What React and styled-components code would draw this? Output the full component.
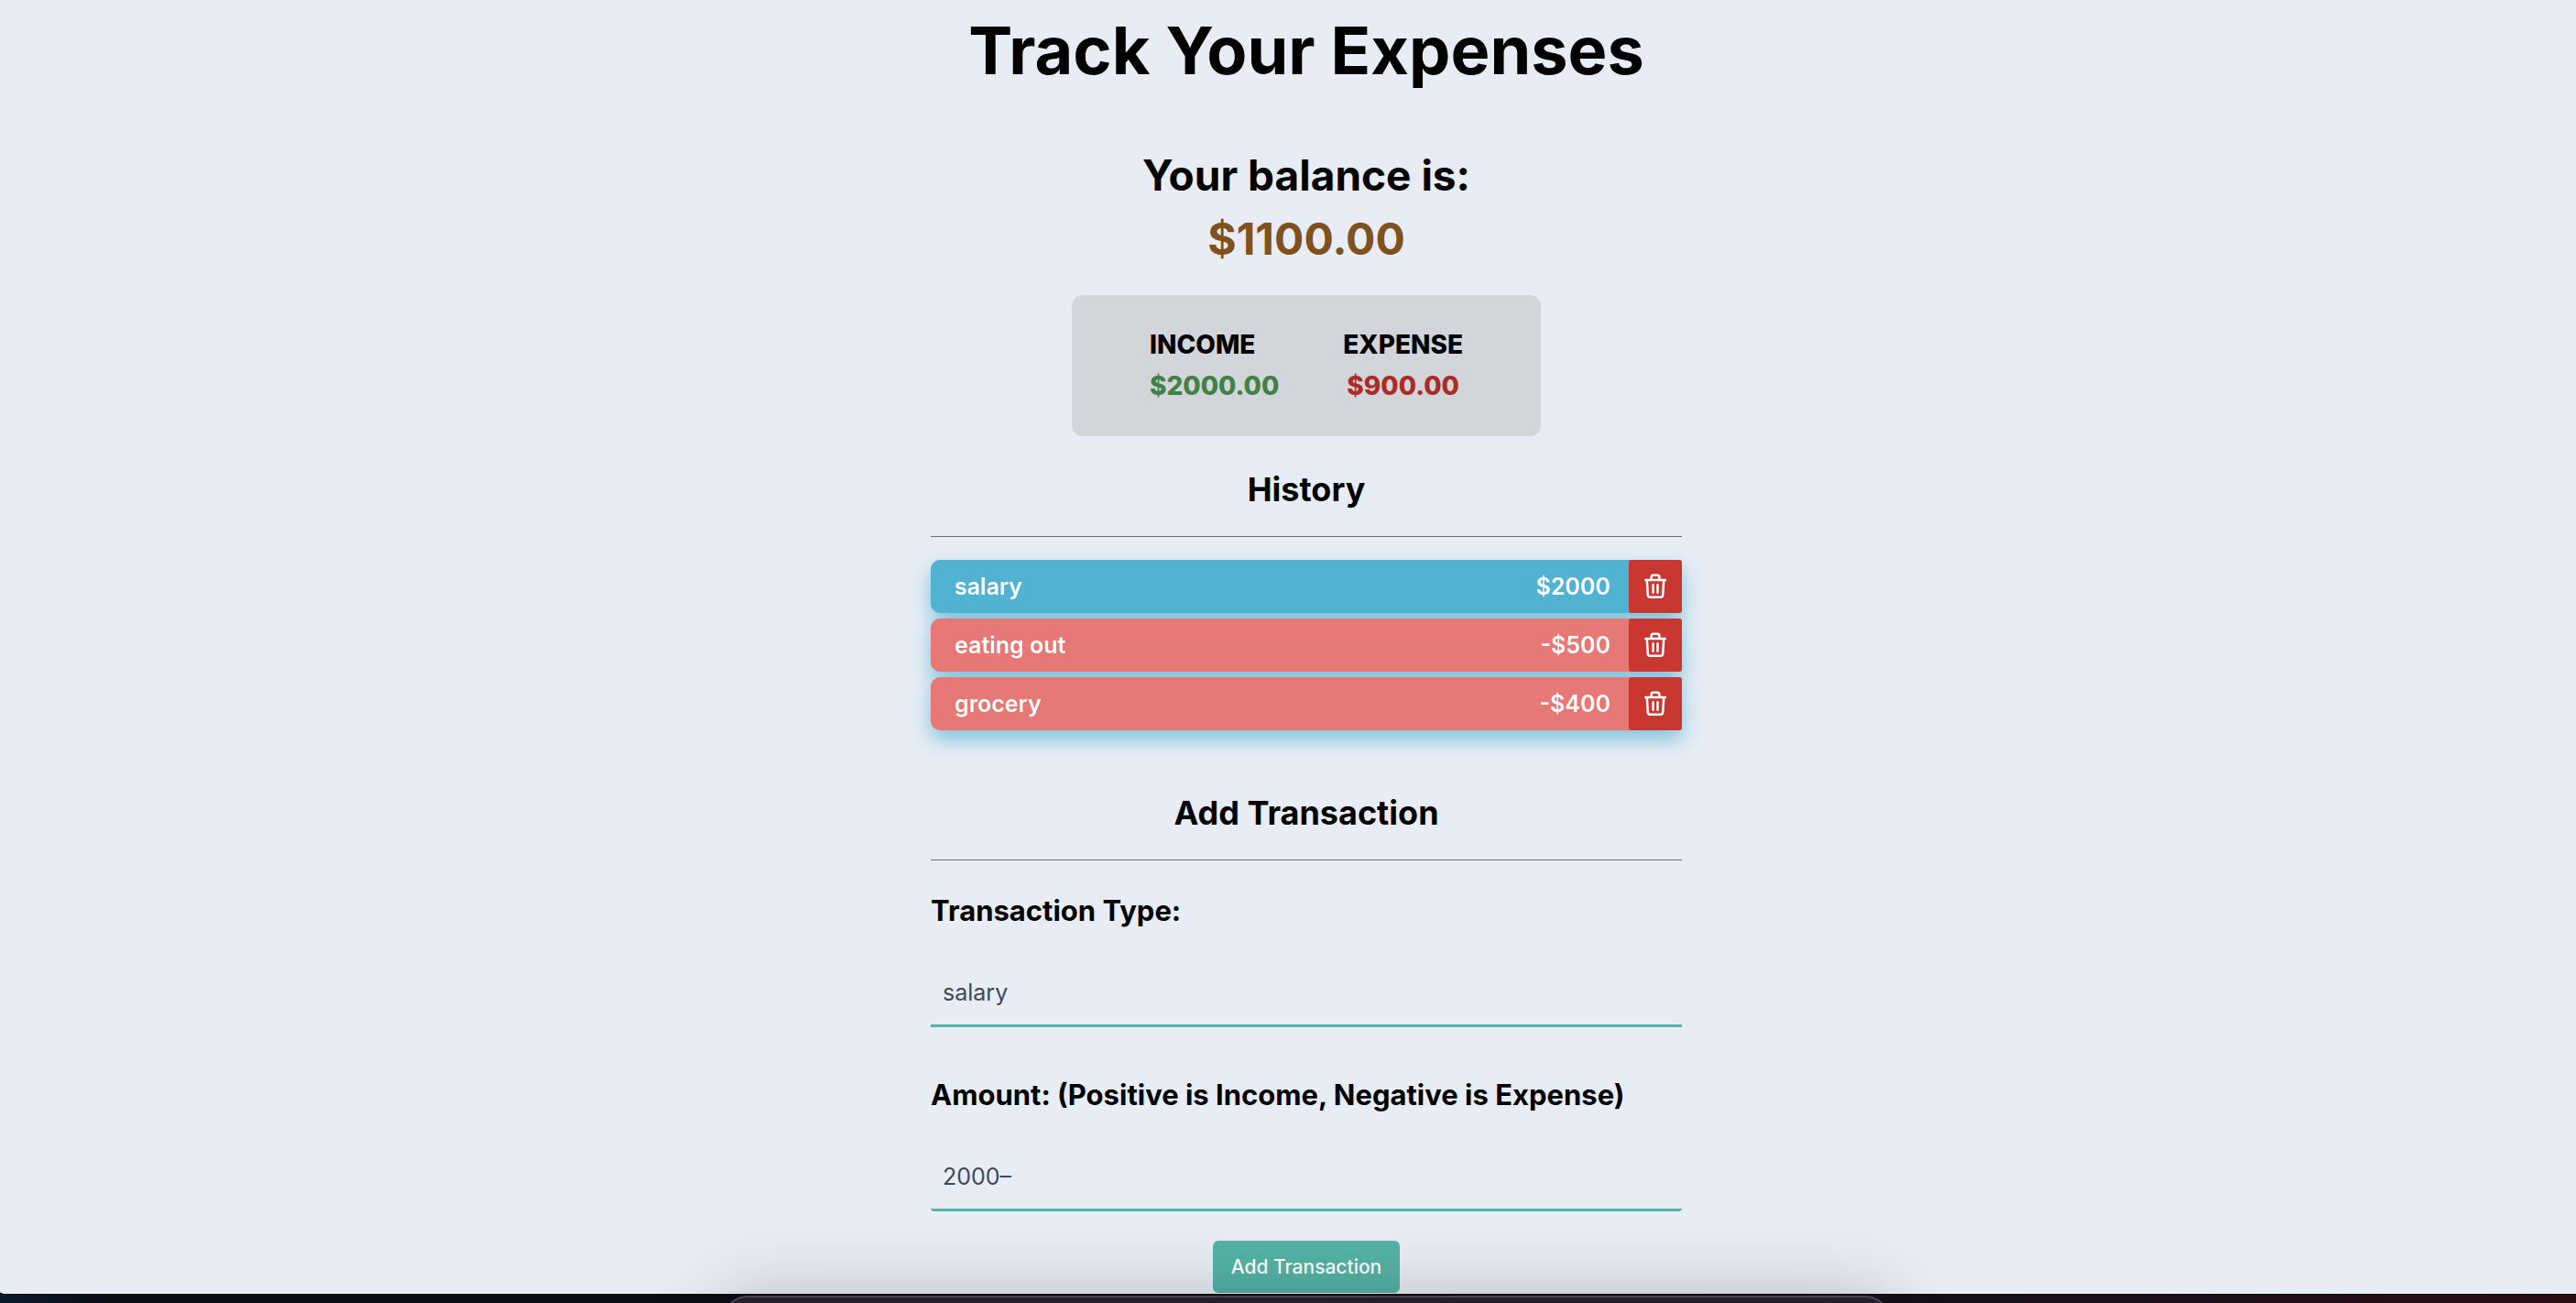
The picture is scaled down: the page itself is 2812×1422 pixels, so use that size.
import React, { useState } from 'react';
import styled, { createGlobalStyle } from 'styled-components';

const GlobalStyle = createGlobalStyle`
  *, *::before, *::after { box-sizing: border-box; }
  body {
    margin: 0;
    min-height: 100vh;
    overflow: hidden;
    background: linear-gradient(90deg, #0b1a2b 0, #0a0d16 120px, #0b0b16 50%, #170f1c 80%, #2a0c14 100%);
    color: #000;
    font-family: Inter, "Liberation Sans", sans-serif;
  }
  h1, h2, h3, p, ul { margin: 0; padding: 0; }
`;

const Page = styled.main`
  display: flex;
  justify-content: center;
  padding: 0 0 1px 40px;
  background: #e8edf5;
  border-bottom-left-radius: 8px 2px;
  box-shadow: 0 1px 0 #000;
`;

const Column = styled.div`
  display: flex;
  flex-direction: column;
  align-items: center;
  width: 100%;
  max-width: 820px;
`;

const Title = styled.h1`
  font-size: 72px;
  line-height: 110px;
  font-weight: 700;
  white-space: nowrap;
`;

const Balance = styled.section`
  margin-top: 46px;
  text-align: center;
  line-height: 70px;
`;

const BalanceLabel = styled.h2`
  font-size: 46px;
  font-weight: 700;
`;

const BalanceValue = styled.p`
  font-size: 48px;
  font-weight: 700;
  color: #7f511f;
`;

const Summary = styled.section`
  display: flex;
  justify-content: space-between;
  width: 512px;
  margin-top: 26px;
  padding: 32px 85px;
  border-radius: 12px;
  background: #d2d5d9;
`;

const SummaryItem = styled.div`
  font-size: 28px;
  line-height: 45px;
  font-weight: 800;
  text-align: ${(p) => p.$align};
`;

const SummaryLabel = styled.h3`
  font-size: inherit;
  font-weight: inherit;
`;

const SummaryValue = styled.p`
  color: ${(p) => p.$color};
`;

const SectionTitle = styled.h2`
  width: 100%;
  margin-top: ${(p) => p.$top}px;
  padding-bottom: 23px;
  border-bottom: 1px solid #6b7080;
  text-align: center;
  font-size: 36px;
  line-height: 56px;
  font-weight: 700;
`;

const List = styled.ul`
  display: flex;
  flex-direction: column;
  gap: 6px;
  width: 100%;
  margin-top: 25px;
  list-style: none;
  filter: drop-shadow(0 10px 11px rgba(82, 178, 209, 0.7));
`;

const Row = styled.li`
  display: flex;
  align-items: center;
  height: 58px;
  padding-left: 26px;
  border-radius: 10px 4px 4px 10px;
  background: ${(p) => (p.$income ? '#52b2d1' : '#e67975')};
  color: #fff;
  font-size: 25px;
  font-weight: 600;
`;

const RowName = styled.span`
  flex: 1;
`;

const DeleteButton = styled.button`
  display: flex;
  align-items: center;
  justify-content: center;
  width: 58px;
  height: 58px;
  margin-left: 20px;
  padding: 0;
  border: 0;
  border-radius: 3px;
  background: #c93830;
  color: #fff;
  cursor: pointer;
`;

const Form = styled.form`
  display: flex;
  flex-direction: column;
  align-items: center;
  width: 100%;
  margin-top: 32px;
`;

const Label = styled.label`
  width: 100%;
  font-size: 31px;
  line-height: 46px;
  font-weight: 700;
`;

const Field = styled.input`
  width: 100%;
  height: 73px;
  margin: 31px 0 ${(p) => p.$gap}px;
  padding: 0 13px;
  border: 0;
  border-bottom: 3px solid #55b3a5;
  border-radius: ${(p) => (p.$rounded ? 4 : 0)}px;
  outline: 0;
  background: transparent;
  color: #414856;
  font: 400 25px Inter, "Liberation Sans", sans-serif;
`;

const SubmitButton = styled.button`
  height: 57px;
  padding: 0 20px;
  border: 0;
  border-radius: 6px;
  background: #55b3a5;
  color: #fff;
  font: 500 21px Inter, "Liberation Sans", sans-serif;
  cursor: pointer;
`;

const Dock = styled.div`
  position: fixed;
  left: calc(50% + 20px);
  bottom: -100px;
  width: 1276px;
  height: 108px;
  transform: translateX(-50%);
  border: 2px solid #47424f;
  border-radius: 28px;
  background: #251e2e;
  box-shadow: 0 4px 80px rgba(0, 8, 0, 0.24);
  pointer-events: none;
`;

const TrashIcon = () => (
  <svg width="28" height="28" viewBox="0 0 28 28" fill="none" stroke="currentColor" strokeWidth="2.5" strokeLinecap="round" strokeLinejoin="round" aria-hidden="true">
    <path d="M3.2 7h21.6M4.8 7l1 16.5q.2 2.300 2.400 2.300h11.600q2.200 0 2.400-2.300l1-16.500M9.600 7V4q0-2.200 2.200-2.200h4.400q2.200 0 2.200 2.200v3M11.500 12.200v8.600M16.500 12.200v8.600" />
  </svg>
);

const initial = [
  { id: 1, name: 'salary', amount: 2000 },
  { id: 2, name: 'eating out', amount: -500 },
  { id: 3, name: 'grocery', amount: -400 },
];

const format = (n) => `${n < 0 ? '-' : ''}$${Math.abs(n)}`;

export default function App() {
  const [items, setItems] = useState(initial);
  const [name, setName] = useState('salary');
  const [amount, setAmount] = useState('2000–');

  const income = items.filter((t) => t.amount > 0).reduce((s, t) => s + t.amount, 0);
  const expense = items.filter((t) => t.amount < 0).reduce((s, t) => s - t.amount, 0);

  const submit = (e) => {
    e.preventDefault();
    const value = parseFloat(amount);
    if (name && value) setItems([...items, { id: Date.now(), name, amount: value }]);
  };

  return (
    <>
      <GlobalStyle />
      <Page>
        <Column>
          <Title>Track Your Expenses</Title>
          <Balance>
            <BalanceLabel>Your balance is:</BalanceLabel>
            <BalanceValue>${(income - expense).toFixed(2)}</BalanceValue>
          </Balance>
          <Summary>
            <SummaryItem $align="left">
              <SummaryLabel>INCOME</SummaryLabel>
              <SummaryValue $color="#3f8146">${income.toFixed(2)}</SummaryValue>
            </SummaryItem>
            <SummaryItem $align="center">
              <SummaryLabel>EXPENSE</SummaryLabel>
              <SummaryValue $color="#ab2c27">${expense.toFixed(2)}</SummaryValue>
            </SummaryItem>
          </Summary>
          <SectionTitle $top={30}>History</SectionTitle>
          <List>
            {items.map((t) => (
              <Row key={t.id} $income={t.amount > 0}>
                <RowName>{t.name}</RowName>
                <span>{format(t.amount)}</span>
                <DeleteButton
                  type="button"
                  aria-label={`Delete ${t.name}`}
                  onClick={() => setItems(items.filter((i) => i.id !== t.id))}
                >
                  <TrashIcon />
                </DeleteButton>
              </Row>
            ))}
          </List>
          <SectionTitle $top={62}>Add Transaction</SectionTitle>
          <Form onSubmit={submit}>
            <Label htmlFor="type">Transaction Type:</Label>
            <Field id="type" $gap={51} value={name} onChange={(e) => setName(e.target.value)} />
            <Label htmlFor="amount">Amount: (Positive is Income, Negative is Expense)</Label>
            <Field id="amount" $gap={32} $rounded value={amount} onChange={(e) => setAmount(e.target.value)} />
            <SubmitButton type="submit">Add Transaction</SubmitButton>
          </Form>
        </Column>
      </Page>
      <Dock />
    </>
  );
}
